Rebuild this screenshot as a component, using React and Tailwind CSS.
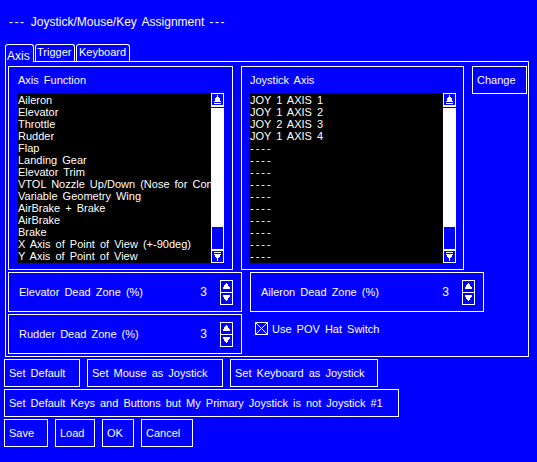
import React from 'react';

const axisFunctions = [
  'Aileron',
  'Elevator',
  'Throttle',
  'Rudder',
  'Flap',
  'Landing Gear',
  'Elevator Trim',
  'VTOL Nozzle Up/Down (Nose for Conventional Airplane)',
  'Variable Geometry Wing',
  'AirBrake + Brake',
  'AirBrake',
  'Brake',
  'X Axis of Point of View (+-90deg)',
  'Y Axis of Point of View',
];

const joystickAxes = [
  'JOY 1 AXIS 1',
  'JOY 1 AXIS 2',
  'JOY 2 AXIS 3',
  'JOY 1 AXIS 4',
  '----', '----', '----', '----', '----',
  '----', '----', '----', '----', '----',
];

// little pixel arrows used by the scrollbars and spinners
const ScrollUpArrow = () => (
  <svg width="7" height="9" viewBox="0 0 7 9" shapeRendering="crispEdges">
    <path d="M3 0h1v2h1l2 5H0l2-5h1z" fill="white" />
    <rect x="0" y="8" width="7" height="1" fill="white" />
  </svg>
);

const ScrollDownArrow = () => (
  <svg width="7" height="9" viewBox="0 0 7 9" shapeRendering="crispEdges">
    <rect x="0" y="0" width="7" height="1" fill="white" />
    <path d="M0 2h7l-2 4h-1v3H3V6H2z" fill="white" />
  </svg>
);

const SpinUpArrow = () => (
  <svg width="7" height="6" viewBox="0 0 7 6" shapeRendering="crispEdges">
    <path d="M3 0h1l3 5H0z" fill="white" />
    <rect x="0" y="5" width="7" height="1" fill="white" />
  </svg>
);

const SpinDownArrow = () => (
  <svg width="7" height="6" viewBox="0 0 7 6" shapeRendering="crispEdges">
    <rect x="0" y="0" width="7" height="1" fill="white" />
    <path d="M0 1h7l-3 5H3z" fill="white" />
  </svg>
);

const ScrollList = ({ items }) => (
  <div className="mt-[7px] flex h-[170px] w-[206px] bg-black">
    <div className="flex-1 overflow-hidden pt-[1px]">
      {items.map((item, i) => (
        <div
          key={i}
          className={`h-[12px] whitespace-nowrap leading-[12px] ${item === '----' ? 'tracking-[2px]' : ''}`}
        >
          {item}
        </div>
      ))}
    </div>
    <div className="flex w-[13px] flex-col bg-white">
      <div className="flex h-[13px] items-center justify-center border border-white bg-[#0000ff]">
        <ScrollUpArrow />
      </div>
      <div className="h-[1px] bg-white" />
      <div className="h-[1px] bg-[#0000ff]" />
      <div className="flex-1 bg-white" />
      <div className="h-[24px] border border-white bg-[#0000ff]" />
      <div className="flex h-[13px] items-center justify-center border border-white bg-[#0000ff]">
        <ScrollDownArrow />
      </div>
    </div>
  </div>
);

const Spinner = () => (
  <div className="ml-[13px] flex h-[25px] w-[13px] flex-col border border-white">
    <div className="flex h-[12px] items-center justify-center border-b border-white">
      <SpinUpArrow />
    </div>
    <div className="flex flex-1 items-center justify-center">
      <SpinDownArrow />
    </div>
  </div>
);

const DeadZone = ({ label }) => (
  <div className="flex h-[40px] w-[234px] items-center border border-white pl-[10px] pr-[8px]">
    <span className="flex-1">{label}</span>
    <span className="text-[12px]">3</span>
    <Spinner />
  </div>
);

const Btn = ({ children, className = '' }) => (
  <div className={`flex h-[28px] items-center border border-white pl-[4px] whitespace-nowrap ${className}`}>
    {children}
  </div>
);

export default function App() {
  return (
    <div className="flex h-[462px] w-[537px] flex-col overflow-hidden bg-[#0000ff] font-['Liberation_Sans',Arial,sans-serif] text-[11px] leading-[12px] text-white [word-spacing:2px]">
      <div className="ml-[9px] mt-[16px] h-[12px] text-[12px]">
        <span className="tracking-[1.5px]">---</span> Joystick/Mouse/Key Assignment{' '}
        <span className="tracking-[1.5px]">---</span>
      </div>

      {/* tabs */}
      <div className="relative z-10 ml-[5px] mt-[16px] flex h-[17px] items-start">
        <div className="h-[18px] w-[29px] rounded-t-[3px] border-l border-r border-t border-white bg-[#0000ff] pl-[1px] pt-[5px] text-[12px]">
          Axis
        </div>
        <div className="ml-[1px] h-[17px] w-[40px] rounded-t-[3px] border-l border-r border-t border-white pl-[1px] pt-[1px]">
          Trigger
        </div>
        <div className="ml-[1px] h-[17px] w-[54px] rounded-t-[3px] border-l border-r border-t border-white pl-[2px] pt-[1px]">
          Keyboard
        </div>
      </div>

      {/* tab page */}
      <div className="ml-[5px] h-[296px] w-[524px] border border-white pl-[2px] pt-[4px]">
        <div className="flex items-start">
          <div className="h-[204px] w-[225px] border border-white pl-[9px] pt-[7px]">
            <div className="h-[12px]">Axis Function</div>
            <ScrollList items={axisFunctions} />
          </div>
          <div className="ml-[8px] h-[204px] w-[223px] border border-white pl-[8px] pt-[7px]">
            <div className="h-[12px]">Joystick Axis</div>
            <ScrollList items={joystickAxes} />
          </div>
          <Btn className="ml-[8px] w-[55px]">Change</Btn>
        </div>

        <div className="mt-[2px] flex items-start">
          <div className="flex flex-col gap-[2px]">
            <DeadZone label="Elevator Dead Zone (%)" />
            <DeadZone label="Rudder Dead Zone (%)" />
          </div>
          <div className="ml-[8px] flex flex-col">
            <DeadZone label="Aileron Dead Zone (%)" />
            <div className="mt-[10px] flex items-center pl-[5px]">
              <svg width="13" height="13" viewBox="0 0 13 13" shapeRendering="crispEdges">
                <rect x="0.5" y="0.5" width="12" height="12" fill="none" stroke="white" />
                <path d="M1 1L12 12M12 1L1 12" stroke="white" strokeWidth="1" />
              </svg>
              <span className="ml-[4px]">Use POV Hat Switch</span>
            </div>
          </div>
        </div>
      </div>

      {/* bottom buttons */}
      <div className="ml-[4px] mt-[2px] flex">
        <Btn className="w-[76px]">Set Default</Btn>
        <Btn className="ml-[7px] w-[136px]">Set Mouse as Joystick</Btn>
        <Btn className="ml-[7px] w-[148px]">Set Keyboard as Joystick</Btn>
      </div>
      <div className="ml-[4px] mt-[2px] flex">
        <Btn className="w-[395px]">Set Default Keys and Buttons but My Primary Joystick is not Joystick #1</Btn>
      </div>
      <div className="ml-[4px] mt-[2px] flex">
        <Btn className="w-[44px]">Save</Btn>
        <Btn className="ml-[7px] w-[40px]">Load</Btn>
        <Btn className="ml-[7px] w-[32px]">OK</Btn>
        <Btn className="ml-[7px] w-[52px]">Cancel</Btn>
      </div>
    </div>
  );
}
